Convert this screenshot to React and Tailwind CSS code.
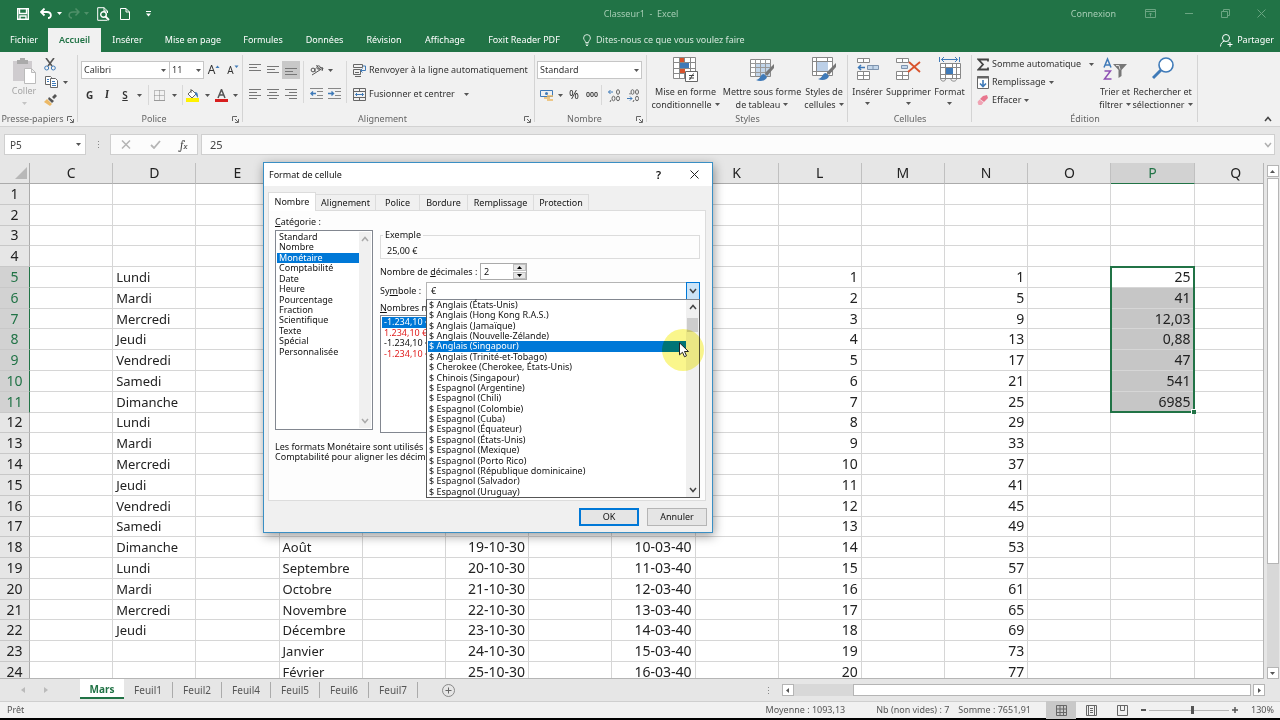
import { clsx } from "clsx"

const days = ["Lundi", "Mardi", "Mercredi", "Jeudi", "Vendredi", "Samedi", "Dimanche"];
const months = ["Août", "Septembre", "Octobre", "Novembre", "Décembre", "Janvier", "Février"];
const amounts = ["25", "41", "12,03", "0,88", "47", "541", "6985"];
const columns = ["C", "D", "E", "F", "G", "H", "I", "J", "K", "L", "M", "N", "O", "P", "Q"];
const rows = Array.from({ length: 24 }, (_, i) => i + 1);

const cellValue = (col, row) => {
    if (row < 5) return "";
    if (col === "D") return row <= 22 ? days[(row - 5) % 7] : "";
    if (col === "F") return months[row - 18] || "";
    if (col === "H") return row >= 18 ? `${row + 1}-10-30` : "";
    if (col === "J") return row >= 18 ? `${row - 8}-03-40` : "";
    if (col === "L") return row - 4;
    if (col === "N") return (row - 5) * 4 + 1;
    if (col === "P") return amounts[row - 5] || "";
    return "";
};

const menu = [
    ["Fichier", "w-[48px]"],
    ["Accueil", "w-[53px]"],
    ["Insérer", "w-[53px]"],
    ["Mise en page", "w-[78px]"],
    ["Formules", "w-[62px]"],
    ["Données", "w-[61px]"],
    ["Révision", "w-[58px]"],
    ["Affichage", "w-[64px]"],
    ["Foxit Reader PDF", "w-[94px]"],
];

const categories = ["Standard", "Nombre", "Monétaire", "Comptabilité", "Date", "Heure", "Pourcentage", "Fraction", "Scientifique", "Texte", "Spécial", "Personnalisée"];

const symbols = [
    "Anglais (États-Unis)", "Anglais (Hong Kong R.A.S.)", "Anglais (Jamaïque)", "Anglais (Nouvelle-Zélande)",
    "Anglais (Singapour)", "Anglais (Trinité-et-Tobago)", "Cherokee (Cherokee, États-Unis)", "Chinois (Singapour)",
    "Espagnol (Argentine)", "Espagnol (Chili)", "Espagnol (Colombie)", "Espagnol (Cuba)", "Espagnol (Équateur)",
    "Espagnol (États-Unis)", "Espagnol (Mexique)", "Espagnol (Porto Rico)", "Espagnol (République dominicaine)",
    "Espagnol (Salvador)", "Espagnol (Uruguay)",
];

const negatives = [
    ["-1.234,10 €", "bg-[#0078d7] text-white"],
    ["1.234,10 €", "text-[#e02020]"],
    ["-1.234,10 €", ""],
    ["-1.234,10 €", "text-[#e02020]"],
];

const Svg = ({ w = 14, h = 14, label, children, className = "" }) => (
    <svg width={w} height={h} viewBox={`0 0 ${w} ${h}`} fill="none" stroke="#666" strokeWidth="1" aria-hidden={!label} aria-label={label} className={`shrink-0 ${className}`}>
        {children}
    </svg>
);

const Arrow = ({ color = "#555", className = "" }) => (
    <svg width="5" height="3" viewBox="0 0 5 3" fill={color} className={`shrink-0 ${className}`} aria-hidden="true">
        <path d="M0 0h5L2.500 3z" />
    </svg>
);

const Chevron = ({ up, color = "#444" }) => (
    <Svg w={8} h={6}>
        <path d={up ? "M1 5l3-3.500 3 3.500" : "M1 1l3 3.500 3-3.500"} stroke={color} strokeWidth="1.500" />
    </Svg>
);

const Tool = ({ label, w = "w-[18px]", className = "", children }) => (
    <button aria-label={label} className={`flex h-[18px] shrink-0 items-center justify-center ${w} ${className}`}>
        {children}
    </button>
);

const Sep = () => <span className="h-[20px] w-px shrink-0 bg-[#d8d8d8]" />;

const Launcher = () => (
    <button aria-label="Options" className="absolute right-[4px] bottom-[3px]">
        <Svg w={7} h={7}>
            <path d="M.5 5V.5H5M3 3l3 3M6.500 3v3.500H3" />
        </Svg>
    </button>
);

const Group = ({ title, w, launcher, children }) => (
    <section className={`relative flex shrink-0 flex-col ${w}`}>
        <div className="h-[60px]">{children}</div>
        <h2 className={clsx("h-[14px] text-center leading-[14px] text-[#666]", launcher && "pr-[13px]")}>{title}</h2>
        {launcher && <Launcher />}
        <span className="absolute top-[3px] right-0 h-[67px] w-px bg-[#d4d4d4]" />
    </section>
);

const BigButton = ({ lines, w, icon }) => (
    <button className={`flex h-[60px] shrink-0 flex-col items-center pt-[5px] leading-[13px] whitespace-nowrap ${w}`}>
        <span className="flex h-[28px] items-start">{icon}</span>
        <span>{lines[0]}</span>
        <span className="flex items-center gap-[3px]">
            {lines[1]}
            <Arrow className={lines[1] ? "" : "mt-[4px]"} />
        </span>
    </button>
);

const Lines = ({ rows: widths, align = "left", top = 2 }) => (
    <Svg w={12} h={14}>
        {widths.map((width, i) => {
            const x = align === "left" ? 0 : align === "right" ? 12 - width : (12 - width) / 2;
            return <path key={i} d={`M${x} ${top + i * 3 + 0.5}h${width}`} stroke="#777" />;
        })}
    </Svg>
);

const Brush = ({ x, y }) => (
    <g transform={`translate(${x} ${y})`}>
        <path d="M18 0L9 9l2 3 7-8z" fill="#777" stroke="none" />
        <path d="M8 10c-4 0-3 5-8 6 4 2 10 1 11-3z" fill="#3f7ab8" stroke="none" />
    </g>
);

const TitleBar = () => (
    <header className="flex h-[27px] shrink-0 items-center text-[9px] text-white">
        <div className="flex flex-1 items-center pl-[15px]">
            <Tool label="Enregistrer" w="w-[16px]">
                <Svg w={12} h={12}>
                    <path d="M.7.700h10.600v10.600H.7zM2.500 1v4.500h7V1M3 11V8h6v3" stroke="#fff" strokeWidth="1.400" />
                </Svg>
            </Tool>
            <Tool label="Annuler la frappe" w="w-[33px]" className="gap-[5px] pl-[7px]">
                <Svg w={12} h={11}>
                    <path d="M4.500.500L1 4l3.500 3.500M1 4h6c5 0 5 6 1 6" stroke="#fff" strokeWidth="1.800" />
                </Svg>
                <Arrow color="#fff" />
            </Tool>
            <Tool label="Répéter" w="w-[27px]" className="gap-[4px] pl-[2px]">
                <Svg w={12} h={11}>
                    <path d="M7.500.500L11 4 7.500 7.500M11 4H5C0 4 0 10 4 10" stroke="#4f9069" strokeWidth="1.500" />
                </Svg>
                <Arrow color="#4f9069" />
            </Tool>
            <Tool label="Aperçu" w="w-[24px]">
                <Svg w={13} h={14}>
                    <path d="M10.500 13.300H.7V.7H7L10.500 4v2M7 .7V4h3.500" stroke="#fff" />
                    <circle cx="6.500" cy="7.500" r="2.800" stroke="#fff" strokeWidth="1.400" />
                    <path d="M8.500 9.500l3.500 3.500" stroke="#fff" strokeWidth="1.800" />
                </Svg>
            </Tool>
            <Tool label="Nouveau" w="w-[20px]">
                <Svg w={10} h={12}>
                    <path d="M.5.500H6L9.500 4v7.500h-9zM6 .5V4h3.500" stroke="#fff" />
                </Svg>
            </Tool>
            <Tool label="Personnaliser" w="w-[26px]">
                <Svg w={5} h={6}>
                    <path d="M0 .500h5" stroke="#fff" />
                    <path d="M0 2.500h5L2.500 5.500z" fill="#fff" stroke="none" />
                </Svg>
            </Tool>
        </div>
        <h1 className="whitespace-pre text-[#a6ccb4]">Classeur1  -  Excel</h1>
        <div className="flex flex-1 items-center justify-end pr-[13px] text-[#a6ccb4]">
            <button className="mr-[28px]">Connexion</button>
            <Tool label="Affichage du ruban" w="w-[12px]" className="mr-[27px]">
                <Svg w={11} h={9}>
                    <path d="M.5.500h10v8H.5zM.5 2.500h10M5.500 7.500V4M4 5.500L5.500 4 7 5.500" stroke="#6ba582" />
                </Svg>
            </Tool>
            <Tool label="Réduire" w="w-[12px]" className="mr-[24px]">
                <Svg w={8} h={9}><path d="M0 4.500h8" stroke="#6ba582" /></Svg>
            </Tool>
            <Tool label="Restaurer" w="w-[12px]" className="mr-[24px]">
                <Svg w={9} h={9}><path d="M.5 2.500h6v6h-6zM2.500 2V.500h6v6H7" stroke="#6ba582" /></Svg>
            </Tool>
            <Tool label="Fermer" w="w-[12px]">
                <Svg w={9} h={9}><path d="M.5.500l8 8M8.500.500l-8 8" stroke="#6ba582" /></Svg>
            </Tool>
        </div>
    </header>
);

const MenuBar = () => (
    <nav className="flex h-[25px] shrink-0 items-end text-[9px] text-white">
        {menu.map(([name, width]) => (
            <button key={name} className={clsx("h-[24px] shrink-0 whitespace-nowrap", width, name === "Accueil" && "bg-[#f1f1f1] font-semibold text-[#217346]")}>
                {name}
            </button>
        ))}
        <button className="ml-[12px] flex h-[24px] items-center gap-[5px] whitespace-nowrap text-[#d3e6da]">
            <Svg w={8} h={12}>
                <path d="M2.500 8.500C2.500 6.500.6 6 .6 4a3.400 3.400 0 016.800 0c0 2-1.900 2.500-1.900 4.500zM2.500 10h3M3 11.500h2" stroke="#d3e6da" />
            </Svg>
            Dites-nous ce que vous voulez faire
        </button>
        <button className="mr-[6px] ml-auto flex h-[24px] items-center gap-[4px]">
            <Svg w={13} h={13}>
                <circle cx="6" cy="4" r="3.500" stroke="#fff" />
                <path d="M.5 12.500c0-3 2-5 4-5.500M8 7.500l1 1M10 8v5M7.500 10.500h5" stroke="#fff" />
            </Svg>
            Partager
        </button>
    </nav>
);

const Ribbon = () => (
    <div className="relative flex h-[75px] shrink-0 overflow-hidden border-b border-[#d2d2d2] bg-[#f1f1f1] text-[9px] text-[#333]">
        <Group title="Presse-papiers" w="w-[78px]" launcher>
            <div className="flex">
                <button className="flex w-[46px] flex-col items-center pt-[6px] pl-[2px] text-[#a6a6a6]">
                    <Svg w={24} h={26}>
                        <path d="M1 3h19v20H1z" fill="#cfcccf" stroke="none" />
                        <path d="M5 2h3V0h5v2h3v4H5z" fill="#aaa" stroke="none" />
                        <path d="M12.500 10.500h7l4 4v11h-11zM19.500 10.500v4h4" fill="#fff" stroke="#bbb" />
                    </Svg>
                    <span className="leading-[14px]">Coller</span>
                    <Arrow color="#c4c4c4" className="mt-[4px]" />
                </button>
                <div className="flex flex-col pt-[3px]">
                    <Tool label="Couper" w="w-[8px]">
                        <Svg w={12} h={13}>
                            <path d="M2 0l6 8M10 0L4 8" stroke="#555" strokeWidth="1.600" />
                            <circle cx="2.700" cy="10" r="2" stroke="#3f7ab8" />
                            <circle cx="9.300" cy="10" r="2" stroke="#3f7ab8" />
                        </Svg>
                    </Tool>
                    <Tool label="Copier" w="w-[20px]" className="gap-[5px]">
                        <Svg w={13} h={12}>
                            <path d="M.5.500h5l1 1v7h-6z" fill="#fff" />
                            <path d="M5.500 2.500h5l2 2v7h-7z" fill="#fff" />
                            <path d="M7 5.500h3M7 7.500h4M7 9.500h4M2 3.500h2M2 5.500h2" stroke="#3f7ab8" />
                        </Svg>
                        <Arrow />
                    </Tool>
                    <Tool label="Reproduire la mise en forme" w="w-[8px]">
                        <Svg w={13} h={12}>
                            <path d="M8 3l3-3 2 2-3 3zM5 3l5 4-2 2-4-4z" fill="#555" stroke="none" />
                            <path d="M3 5l5 5-2 2-6-4z" fill="#ecb966" stroke="none" />
                        </Svg>
                    </Tool>
                </div>
            </div>
        </Group>

        <Group title="Police" w="w-[165px]" launcher>
            <div className="flex flex-col gap-[6px] pt-[9px] pl-[3px]">
                <div className="flex">
                    <label className="relative flex w-[89px] items-center">
                        <select aria-label="Nom de la police" className="h-[18px] w-full appearance-none border border-[#c6c6c6] bg-white pl-[2px]">
                            <option>Calibri</option>
                        </select>
                        <Arrow className="pointer-events-none absolute right-[4px]" />
                    </label>
                    <label className="relative -ml-px flex w-[35px] items-center">
                        <select aria-label="Taille" className="h-[18px] w-full appearance-none border border-[#c6c6c6] bg-white pl-[2px]">
                            <option>11</option>
                        </select>
                        <Arrow className="pointer-events-none absolute right-[3px]" />
                    </label>
                    <Tool label="Augmenter la taille" w="w-[20px]" className="text-[12px]">
                        A<Svg w={5} h={10}><path d="M.5 3L2.500.500 4.500 3z" fill="#3f7ab8" stroke="none" /></Svg>
                    </Tool>
                    <Tool label="Réduire la taille" w="w-[18px]" className="text-[10px]">
                        A<Svg w={5} h={10}><path d="M.5.500h4L2.500 3z" fill="#3f7ab8" stroke="none" /></Svg>
                    </Tool>
                </div>
                <div className="flex items-center text-[10px]">
                    <Tool label="Gras" w="w-[17px]" className="font-bold">G</Tool>
                    <Tool label="Italique" className="font-serif text-[11px] font-bold italic">I</Tool>
                    <Tool label="Souligné" w="w-[32px]" className="gap-[9px]"><u className="font-semibold">S</u><Arrow /></Tool>
                    <Sep />
                    <Tool label="Bordures" w="w-[33px]" className="gap-[7px]">
                        <Svg w={11} h={11}>
                            <path d="M.5.500h10v10H.5zM5.500.500v10M.5 5.500h10" stroke="#888" strokeDasharray="1 1" />
                            <path d="M0 10.500h11" stroke="#999" />
                        </Svg>
                        <Arrow />
                    </Tool>
                    <Sep />
                    <Tool label="Couleur de remplissage" w="w-[29px]" className="gap-[6px]">
                        <Svg w={13} h={13}>
                            <path d="M2 5l4-4 4 4-4 4z" fill="#fff" />
                            <path d="M5 0v4" />
                            <path d="M9 3c3 0 3 3 3 6l-3-4z" fill="#3f7ab8" stroke="none" />
                            <path d="M0 9h13v4H0z" fill="#fff200" stroke="none" />
                        </Svg>
                        <Arrow />
                    </Tool>
                    <Tool label="Couleur de police" w="w-[28px]" className="gap-[5px]">
                        <Svg w={13} h={13}>
                            <path d="M3 9l3.500-8.500L10 9M4.500 6h4" stroke="#555" strokeWidth="1.500" />
                            <path d="M0 10h13v3H0z" fill="#d81e1e" stroke="none" />
                        </Svg>
                        <Arrow />
                    </Tool>
                </div>
            </div>
        </Group>

        <Group title="Alignement" w="w-[292px]" launcher>
            <div className="flex pt-[9px] pl-[3px]">
                <div className="flex flex-col gap-[6px]">
                    <div className="flex">
                        <Tool label="Aligner en haut"><Lines rows={[12, 8, 12]} top={1} /></Tool>
                        <Tool label="Aligner au centre"><Lines rows={[12, 8, 12]} top={3} /></Tool>
                        <Tool label="Aligner en bas" className="bg-[#c8c8c8]"><Lines rows={[12, 8, 12]} top={5} /></Tool>
                    </div>
                    <div className="flex">
                        <Tool label="Aligner à gauche"><Lines rows={[12, 8, 12, 8]} /></Tool>
                        <Tool label="Centrer"><Lines rows={[12, 8, 12, 8]} align="center" /></Tool>
                        <Tool label="Aligner à droite"><Lines rows={[12, 8, 12, 8]} align="right" /></Tool>
                    </div>
                </div>
                <span className="mx-[3px] h-[42px] w-px bg-[#d8d8d8]" />
                <div className="flex flex-col gap-[6px]">
                    <Tool label="Orientation" w="w-[28px]" className="gap-[4px]">
                        <Svg w={14} h={12}>
                            <circle cx="3" cy="6" r="1.900" stroke="#555" />
                            <path d="M5 4v4M6.500 1l3 4.500M2 11L13 4M10 3.500l3 .5-1 3" stroke="#555" />
                            <circle cx="8.500" cy="3.500" r="1.700" stroke="#555" />
                        </Svg>
                        <Arrow />
                    </Tool>
                    <div className="flex">
                        <Tool label="Diminuer le retrait">
                            <Svg w={13} h={12}>
                                <path d="M0 .500h13M7 3.500h6M7 7.500h6M0 10.500h13" stroke="#888" />
                                <path d="M6 5.500H1M3 3.500l-2 2 2 2" stroke="#3f7ab8" strokeWidth="1.400" />
                            </Svg>
                        </Tool>
                        <Tool label="Augmenter le retrait">
                            <Svg w={13} h={12}>
                                <path d="M0 .500h13M7 3.500h6M7 7.500h6M0 10.500h13" stroke="#888" />
                                <path d="M0 5.500h5M3.500 3.500l2 2-2 2" stroke="#3f7ab8" strokeWidth="1.400" />
                            </Svg>
                        </Tool>
                    </div>
                </div>
                <span className="mx-[3px] h-[42px] w-px bg-[#d8d8d8]" />
                <div className="flex flex-col gap-[6px] pl-[3px]">
                    <button className="flex h-[18px] items-center gap-[3px] whitespace-nowrap">
                        <Svg w={13} h={13}>
                            <path d="M.5.500h9v3h-9zM.5 5.500h7v5h-7zM2 8.500h4M2 12.500h6" />
                            <path d="M10 2h2.500v4.500H8M9.500 4.500l-2 2 2 2" stroke="#3f7ab8" />
                        </Svg>
                        Renvoyer à la ligne automatiquement
                    </button>
                    <button className="flex h-[18px] items-center gap-[3px] whitespace-nowrap">
                        <Svg w={13} h={13}>
                            <path d="M.5.500h12v12H.5zM.5 3.500h12M.5 9.500h12M6.500.500v3M6.500 9.500v3" />
                            <path d="M2.500 6.500h8M4 5L2.500 6.500 4 8M9 5l1.500 1.500L9 8" stroke="#3f7ab8" />
                        </Svg>
                        Fusionner et centrer
                        <Arrow className="ml-[6px]" />
                    </button>
                </div>
            </div>
        </Group>

        <Group title="Nombre" w="w-[112px]" launcher>
            <div className="flex flex-col gap-[6px] pt-[9px] pl-[2px]">
                <label className="relative flex w-[105px] items-center">
                    <select aria-label="Format de nombre" className="h-[18px] w-full appearance-none border border-[#c6c6c6] bg-white pl-[2px]">
                        <option>Standard</option>
                    </select>
                    <Arrow className="pointer-events-none absolute right-[3px]" />
                </label>
                <div className="flex items-center">
                    <Tool label="Format comptabilité" w="w-[28px]" className="gap-[5px]">
                        <Svg w={13} h={13}>
                            <path d="M.5 1.500h12v6H.5z" stroke="#3f7ab8" />
                            <circle cx="6.500" cy="4.500" r="1.500" fill="#3f7ab8" stroke="none" />
                            <path d="M4 9h6M7 11h6M7 7h6" stroke="#ecb966" strokeWidth="1.500" />
                        </Svg>
                        <Arrow />
                    </Tool>
                    <Tool label="Pourcentage" w="w-[18px]" className="text-[12px]">%</Tool>
                    <Tool label="Milliers" className="text-[7px] font-semibold">000</Tool>
                    <Sep />
                    {["Ajouter une décimale", "Réduire les décimales"].map((label, i) => (
                        <Tool key={label} label={label} w="w-[19px]" className="pl-[4px]">
                            <Svg w={12} h={13}>
                                {i === 0 && <path d="M5 3H.5M2.500 1l-2 2 2 2" stroke="#3f7ab8" />}
                                {i === 1 && <path d="M0 9.500h5M3 7.500l2 2-2 2" stroke="#3f7ab8" />}
                                <ellipse cx="10" cy="3" rx="1.500" ry="2.300" />
                                <ellipse cx="10" cy="9.500" rx="1.500" ry="2.300" />
                                {i === 0 ? <ellipse cx="5.500" cy="9.500" rx="1.500" ry="2.300" /> : <ellipse cx="5.500" cy="3" rx="1.500" ry="2.300" />}
                                <path d={i === 0 ? "M3 11l-1 2" : "M3 4v1.500M7 11l-1 2"} />
                            </Svg>
                        </Tool>
                    ))}
                </div>
            </div>
        </Group>

        <Group title="Styles" w="w-[201px]">
            <div className="flex pl-[1px]">
                <BigButton w="w-[75px]" lines={["Mise en forme", "conditionnelle"]} icon={
                    <Svg w={25} h={26}>
                        <path d="M.5.500h22v21H.5zM.5 5.500h22M.5 11.500h22M.5 16.500h22M6.500.500v21M11.500.500v21M17.500.500v21" fill="#fff" stroke="#888" />
                        <path d="M7 1h4v4H7zM7 12h5v4H7z" fill="#d9532c" stroke="none" />
                        <path d="M7 6h9v5H7z" fill="#3f7ab8" stroke="none" />
                        <path d="M12.500 14.500h12v10h-12z" fill="#fff" />
                        <path d="M16 18.500h5M16 21h5M20.500 16.500l-4 6.500" stroke="#444" />
                    </Svg>
                } />
                <BigButton w="w-[78px]" lines={["Mettre sous forme", "de tableau"]} icon={
                    <Svg w={25} h={26}>
                        <path d="M.5 2.500h20v17H.5z" fill="#fff" stroke="#888" />
                        <path d="M6 7h14v12H6z" fill="#c3d6ea" stroke="none" />
                        <path d="M.5 6.500h20M.5 10.500h20M.5 15.500h20M5.500 2.500v17M10.500 2.500v17M15.500 2.500v17" stroke="#999" />
                        <Brush x={6} y={7} />
                    </Svg>
                } />
                <BigButton w="w-[46px]" lines={["Styles de", "cellules"]} icon={
                    <Svg w={25} h={26}>
                        <path d="M.5.500h20v18H.5zM.5 4.500h20M.5 14.500h20M4.500.500v18M15.500.500v18" fill="#fff" stroke="#888" />
                        <path d="M5 5h11v9H5z" fill="#bcd0e8" stroke="none" />
                        <Brush x={6} y={6} />
                    </Svg>
                } />
            </div>
        </Group>

        <Group title="Cellules" w="w-[124px]">
            <div className="flex">
                <BigButton w="w-[39px]" lines={["Insérer", ""]} icon={
                    <Svg w={22} h={24}>
                        <path d="M.5 1.500h12v4H.5zM6.500 1.500v4M.5 14.500h12v8H.5zM6.500 14.500v8M.5 18.500h12" fill="#fff" stroke="#888" />
                        <path d="M10.500 8.500h11v4h-11zM16 8.500v4" fill="#c3d6ea" stroke="#7d93ad" />
                        <path d="M8 10.500H1.500M4 8l-2.500 2.500L4 13" stroke="#3f7ab8" strokeWidth="1.500" />
                    </Svg>
                } />
                <BigButton w="w-[43px]" lines={["Supprimer", ""]} icon={
                    <Svg w={25} h={24}>
                        <path d="M.5 1.500h12v4H.5zM6.500 1.500v4M.5 14.500h12v8H.5zM6.500 14.500v8M.5 18.500h12" fill="#fff" stroke="#888" />
                        <path d="M5.500 8.500h6v3h-6z" fill="#c3d6ea" stroke="#7d93ad" />
                        <path d="M13 5l11 10M24 5L12 15" stroke="#d9532c" strokeWidth="1.800" />
                    </Svg>
                } />
                <BigButton w="w-[39px]" lines={["Format", ""]} icon={
                    <Svg w={24} h={26}>
                        <path d="M3.500 2.500h16M6 0L3.500 2.500 6 5M17 0l2.500 2.500L17 5M1.500 0v5M21.500 0v5" stroke="#3f7ab8" />
                        <path d="M2.500 6.500h20v15h-20zM2.500 10.500h20M2.500 17.500h20M7.500 6.500v15M14.500 6.500v15M18.500 6.500v15" fill="#fff" stroke="#888" />
                        <path d="M8 11h7v6H8z" fill="#3f7ab8" stroke="none" />
                        <path d="M2.500 21c0 4 5 4 5 1M12.500 21c0 4 6 4 6 1" stroke="#888" />
                    </Svg>
                } />
            </div>
        </Group>

        <Group title="Édition" w="w-[226px]">
            <div className="flex">
                <div className="flex w-[127px] flex-col pt-[3px] pl-[5px]">
                    <button className="flex h-[18px] items-center gap-[3px] whitespace-nowrap">
                        <Svg w={12} h={13}><path d="M11 3.500V1.500H1.500L6 6.500l-4.500 5H11v-2" stroke="#444" strokeWidth="1.800" /></Svg>
                        Somme automatique
                        <Arrow className="ml-[5px]" />
                    </button>
                    <button className="flex h-[18px] items-center gap-[3px]">
                        <Svg w={12} h={13}>
                            <path d="M.5.500h11v12H.5z" fill="#fff" />
                            <path d="M0 1.500h12" stroke="#666" strokeWidth="2" />
                            <path d="M6 4v6.500M3 7.500l3 3 3-3" stroke="#3f7ab8" strokeWidth="1.600" />
                        </Svg>
                        Remplissage <Arrow />
                    </button>
                    <button className="flex h-[18px] items-center gap-[3px]">
                        <Svg w={12} h={11}>
                            <path d="M6 1l4-1 1 3-4 4-4-3z" fill="#e8768e" stroke="none" />
                            <path d="M2.500 4.500l4 3-2 2.500H1.500L.5 7z" fill="#f0a3b3" stroke="none" />
                        </Svg>
                        Effacer <Arrow />
                    </button>
                </div>
                <BigButton w="w-[32px]" lines={["Trier et", "filtrer"]} icon={
                    <Svg w={24} h={24}>
                        <path d="M1 10.500L4.500 2 8 10.500M2.500 8h4.500" stroke="#3f7ab8" strokeWidth="1.500" />
                        <path d="M1.500 14h6l-6 8h7" stroke="#8d4fb3" strokeWidth="1.500" />
                        <path d="M10 7h14l-5.500 6v6l-3 2v-8z" fill="#777" stroke="none" />
                        <path d="M13 8.500h3l1 4" stroke="#ddd" />
                    </Svg>
                } />
                <BigButton w="w-[63px]" lines={["Rechercher et", "sélectionner"]} icon={
                    <Svg w={22} h={23}>
                        <circle cx="14" cy="8" r="7" fill="#fff" stroke="#3f7ab8" strokeWidth="1.600" />
                        <path d="M9 13l-8 8" stroke="#3f7ab8" strokeWidth="3" />
                    </Svg>
                } />
            </div>
        </Group>
        <button aria-label="Réduire le ruban" className="mt-auto mr-[8px] mb-[4px] ml-auto"><Chevron up /></button>
    </div>
);

const FormulaBar = () => (
    <div className="flex h-[36px] shrink-0 pt-[7px] pr-[5px] pl-[4px] text-[10px] text-[#444]">
        <label className="relative flex h-[21px] w-[82px] items-center">
            <input aria-label="Zone Nom" defaultValue="P5" className="h-full w-full border border-[#cfcfcf] bg-white pl-[5px]" />
            <Arrow className="absolute right-[5px]" />
        </label>
        <span className="flex h-[21px] w-[24px] flex-col items-center justify-center gap-[2px]">
            <i className="size-px bg-[#888]" /><i className="size-px bg-[#888]" /><i className="size-px bg-[#888]" />
        </span>
        <div className="mr-[3px] flex h-[21px] w-[88px] items-center justify-around border border-[#cfcfcf] bg-[#fcfcfc]">
            <button aria-label="Annuler la saisie"><Svg w={10} h={9}><path d="M1 .500l8 8M9 .500l-8 8" stroke="#b5b5b5" strokeWidth="1.500" /></Svg></button>
            <button aria-label="Valider"><Svg w={11} h={9}><path d="M1 5l3 3 6-7" stroke="#b5b5b5" strokeWidth="1.800" /></Svg></button>
            <button className="font-serif text-[12px] leading-none italic">f<span className="text-[9px]">x</span></button>
        </div>
        <label className="relative flex h-[21px] flex-1 items-center text-[11px]">
            <input aria-label="Barre de formule" defaultValue="25" className="h-full w-full border border-[#cfcfcf] bg-[#fcfcfc] pl-[8px]" />
            <span className="absolute right-[3px]"><Chevron color="#b0b0b0" /></span>
        </label>
    </div>
);

const Sheet = () => (
    <div className="flex min-h-0 flex-1">
        <div className="min-w-0 flex-1 overflow-hidden border-r border-b border-[#b5b5b5] bg-white">
            <table className="h-[calc(100%+5px)] w-[calc(100%+15px)] table-fixed border-separate border-spacing-0 text-[14px] leading-[16px] text-[#222]">
                <thead>
                    <tr className="h-[21px] bg-[#e6e6e6]">
                        <th className="w-[30px] border-r border-b border-[#ababab] p-0">
                            <Svg w={12} h={12} className="ml-auto mr-[2px]"><path d="M12 0v12H0z" fill="#b8b8b8" stroke="none" /></Svg>
                        </th>
                        {columns.map((col) => (
                            <th key={col} scope="col" className={clsx("border-r border-b p-0 font-normal", col === "P" ? "border-r-[#c0c0c0] border-b-[#217346] bg-[#d2d2d2] text-[#217346]" : "border-r-[#c0c0c0] border-b-[#ababab]")}>
                                {col}
                            </th>
                        ))}
                    </tr>
                </thead>
                <tbody>
                    {rows.map((row) => (
                        <tr key={row}>
                            <th scope="row" className={clsx("border-r border-b border-b-[#c8c8c8] p-0 font-normal", row >= 5 && row <= 11 ? "border-r-[#217346] bg-[#d2d2d2] text-[#217346]" : "border-r-[#ababab] bg-[#e6e6e6]")}>
                                {row}
                            </th>
                            {columns.map((col) => (
                                <td key={col} className={clsx(
                                    "border-r border-b border-[#d6d6d6] p-0 px-[3px]",
                                    col === "D" || col === "F" ? "text-[13px]" : "text-right",
                                    col === "P" && row >= 6 && row <= 11 && "bg-[#c6c6c6]",
                                    col === "P" && row === 5 && "relative",
                                )}>
                                    {cellValue(col, row)}
                                    {col === "P" && row === 5 && (
                                        <span className="absolute -top-px -left-px h-[calc(700%+8px)] w-[calc(100%+2px)] border-2 border-[#217346]">
                                            <i className="absolute -right-[3px] -bottom-[3px] size-[5px] border-t border-l border-white bg-[#217346]" />
                                        </span>
                                    )}
                                </td>
                            ))}
                        </tr>
                    ))}
                </tbody>
            </table>
        </div>
        <div className="ml-[1px] flex w-[15px] shrink-0 flex-col items-center pt-[2px]">
            <button aria-label="Défiler vers le haut" className="mb-px flex h-[12px] w-[12px] items-center justify-center border border-[#b5b5b5] bg-white">
                <Arrow className="rotate-180" />
            </button>
            <div className="w-[12px] flex-1 bg-[#d8d8d8]">
                <div className="h-[79%] border border-[#b5b5b5] bg-white" />
            </div>
            <button aria-label="Défiler vers le bas" className="flex h-[12px] w-[12px] items-center justify-center border border-[#b5b5b5] bg-white">
                <Arrow />
            </button>
        </div>
    </div>
);

const SheetTabs = () => (
    <div className="flex h-[22px] shrink-0 text-[10px] text-[#555]">
        <div className="flex w-[80px] items-center justify-center gap-[19px] pr-[12px]">
            <Svg w={4} h={6}><path d="M4 0v6L0 3z" fill="#bbb" stroke="none" /></Svg>
            <Svg w={4} h={6}><path d="M0 0v6l4-3z" fill="#bbb" stroke="none" /></Svg>
        </div>
        <button className="h-[20px] w-[44px] border-b-2 border-[#217346] bg-white pt-[2px] font-bold text-[#217346]">Mars</button>
        {["Feuil1", "Feuil2", "Feuil4", "Feuil5", "Feuil6", "Feuil7"].map((name) => (
            <button key={name} className="mt-[3px] h-[16px] w-[49px] border-r border-[#ababab] leading-[16px]">{name}</button>
        ))}
        <button aria-label="Nouvelle feuille" className="ml-[24px]">
            <Svg w={13} h={13}><circle cx="6.500" cy="6.500" r="6" stroke="#888" /><path d="M3.500 6.500h6M6.500 3.500v6" /></Svg>
        </button>
        <div className="mr-[15px] ml-auto flex w-[39%] items-center">
            <span className="mr-[13px] flex flex-col gap-[2px] pl-[2px]">
                <i className="size-px bg-[#888]" /><i className="size-px bg-[#888]" /><i className="size-px bg-[#888]" />
            </span>
            <button aria-label="Défiler à gauche" className="flex h-[12px] w-[12px] items-center justify-center border border-[#b5b5b5] bg-white">
                <Svg w={3} h={5}><path d="M3 0v5L0 2.500z" fill="#555" stroke="none" /></Svg>
            </button>
            <div className="flex h-[12px] flex-1 justify-end bg-[#d8d8d8]">
                <div className="w-[87%] border border-[#b5b5b5] bg-white" />
            </div>
            <button aria-label="Défiler à droite" className="ml-[2px] flex h-[12px] w-[12px] items-center justify-center border border-[#b5b5b5] bg-white">
                <Svg w={3} h={5}><path d="M0 0v5l3-2.500z" fill="#555" stroke="none" /></Svg>
            </button>
        </div>
    </div>
);

const StatusBar = () => (
    <footer className="flex h-[19px] shrink-0 items-center border-t border-b-2 border-t-[#cfcfcf] border-b-black bg-[#f1f1f1] pr-[6px] pl-[7px] text-[9px] whitespace-nowrap text-[#555]">
        <span className="mr-auto">Prêt</span>
        <span className="mr-[31px]">Moyenne : 1093,13</span>
        <span className="mr-[9px]">Nb (non vides) : 7</span>
        <span className="mr-[15px]">Somme : 7651,91</span>
        <Tool label="Normal" w="w-[30px]" className="bg-[#c8c8c8]">
            <Svg w={11} h={11}><path d="M.5.500h10v10H.5zM.5 4h10M.5 7.500h10M4 .5v10M7.500.500v10" /></Svg>
        </Tool>
        <Tool label="Mise en page" w="w-[31px]">
            <Svg w={11} h={11}><path d="M.5.500h10v10H.5zM2.500 1v9M8.500 1v9M4 3.500h3M4 5.500h3M4 7.500h3" /></Svg>
        </Tool>
        <Tool label="Aperçu des sauts de page" w="w-[30px]">
            <Svg w={11} h={11}><path d="M.5.500h10v10H.5zM3.500.500v5h4v-5" /></Svg>
        </Tool>
        <button aria-label="Zoom arrière" className="mr-[3px] ml-[4px] h-[2px] w-[5px] bg-[#555]" />
        <input
            type="range"
            aria-label="Zoom"
            min="0"
            max="100"
            defaultValue="55"
            className="h-[10px] w-[80px] appearance-none bg-[linear-gradient(#b5b5b5,#b5b5b5)] bg-[length:100%_1px] bg-center bg-no-repeat [&::-webkit-slider-thumb]:h-[8px] [&::-webkit-slider-thumb]:w-[3px] [&::-webkit-slider-thumb]:appearance-none [&::-webkit-slider-thumb]:bg-[#555]"
        />
        <button aria-label="Zoom avant" className="mr-[13px] ml-[3px]">
            <Svg w={6} h={6}><path d="M0 3h6M3 0v6" stroke="#555" strokeWidth="1.500" /></Svg>
        </button>
        <span className="w-[23px]">130%</span>
    </footer>
);

const FormatDialog = () => (
    <div role="dialog" aria-label="Format de cellule" className="absolute top-[162px] left-[263px] flex h-[371px] w-[450px] flex-col border border-[#3a8fc4] bg-[#f0f0f0] text-[9px] leading-[10px] text-[#111] shadow-[1px_3px_10px_rgba(0,0,0,0.4)]">
        <div className="flex h-[23px] shrink-0 items-center bg-white pr-[13px] pl-[5px]">
            <span className="mr-auto">Format de cellule</span>
            <button aria-label="Aide" className="mr-[29px] text-[11px] font-semibold">?</button>
            <button aria-label="Fermer"><Svg w={9} h={9}><path d="M.5.500l8 8M8.500.500l-8 8" stroke="#222" /></Svg></button>
        </div>
        <div className="flex h-[24px] shrink-0 items-end pl-[4px]">
            {[["Nombre", "w-[48px]"], ["Alignement", "w-[60px]"], ["Police", "w-[44px]"], ["Bordure", "w-[48px]"], ["Remplissage", "w-[66px]"], ["Protection", "w-[55px]"]].map(([name, width], i) => (
                <button key={name} className={clsx("border border-b-0 border-[#dcdcdc]", width, i === 0 ? "relative -mb-px h-[19px] bg-white" : "h-[16px] border-l-0")}>
                    {name}
                </button>
            ))}
        </div>
        <div className="mr-[6px] ml-[4px] flex h-[291px] shrink-0 flex-col border border-[#dcdcdc] bg-[#fdfdfd] pt-[6px] pr-[5px] pl-[6px]">
            <div className="flex gap-[7px]">
                <div className="flex w-[98px] flex-col gap-[3px]">
                    <span><u>C</u>atégorie :</span>
                    <div className="flex h-[200px] border border-[#828790] bg-white p-px">
                        <ul role="listbox" aria-label="Catégorie" className="grid h-[125px] flex-1 grid-rows-12">
                            {categories.map((name) => (
                                <li key={name} role="option" aria-selected={name === "Monétaire"} className={clsx("pl-[2px]", name === "Monétaire" && "bg-[#0078d7] text-white")}>
                                    {name}
                                </li>
                            ))}
                        </ul>
                        <div className="flex w-[12px] flex-col items-center justify-between bg-[#f0f0f0] py-[4px]">
                            <Chevron up color="#aaa" />
                            <Chevron color="#aaa" />
                        </div>
                    </div>
                </div>
                <div className="flex min-w-0 flex-1 flex-col">
                    <fieldset className="mt-[13px] h-[29px] border border-[#dcdcdc] pl-[6px]">
                        <legend className="-ml-[4px] px-[2px]">Exemple</legend>
                        <p className="pt-[6px]">25,00 €</p>
                    </fieldset>
                    <div className="mt-[4px] flex h-[17px] items-center">
                        <label htmlFor="decimals" className="w-[100px]">Nombre de <u>d</u>écimales :</label>
                        <div className="flex h-[17px] w-[47px] border border-[#ababab] bg-white">
                            <input id="decimals" defaultValue="2" className="w-[32px] pl-[3px]" />
                            <div className="flex flex-1 flex-col gap-px">
                                <button aria-label="Plus" className="flex flex-1 items-center justify-center border border-[#c0c0c0] bg-[#e6e6e6]"><Arrow color="#000" className="rotate-180" /></button>
                                <button aria-label="Moins" className="flex flex-1 items-center justify-center border border-[#c0c0c0] bg-[#e6e6e6]"><Arrow color="#000" /></button>
                            </div>
                        </div>
                    </div>
                    <div className="relative mt-[2px] flex h-[18px] items-center">
                        <label htmlFor="symbol" className="w-[46px]">Sy<u>m</u>bole :</label>
                        <select id="symbol" className="h-[18px] flex-1 appearance-none border border-[#b5b5b5] bg-white pl-[4px]">
                            <option>€</option>
                        </select>
                        <span className="absolute right-0 flex h-[18px] w-[14px] items-center justify-center border border-[#0078d7] bg-[#cce4f7]"><Chevron /></span>
                        <SymbolList />
                    </div>
                    <span className="mt-[3px]"><u>N</u>ombres négatifs :</span>
                    <div className="mt-[2px] h-[118px] border border-[#828790] bg-white p-px">
                        <ul role="listbox" aria-label="Nombres négatifs" className="grid h-[42px] grid-rows-4">
                            {negatives.map(([value, color], i) => (
                                <li key={i} role="option" aria-selected={i === 0} className={`pl-[2px] ${color}`}>{value}</li>
                            ))}
                        </ul>
                    </div>
                </div>
            </div>
            <p className="mt-[9px]">
                Les formats Monétaire sont utilisés pour des valeurs monétaires générales. Utilisez les formats de Comptabilité pour aligner les décimaux dans une colonne.
            </p>
        </div>
        <div className="flex flex-1 items-center justify-end gap-[8px] pr-[5px]">
            <button className="h-[18px] w-[60px] border-2 border-[#0078d7] bg-[#e5e5e5]">OK</button>
            <button className="h-[18px] w-[60px] border border-[#b5b5b5] bg-[#e5e5e5]">Annuler</button>
        </div>
    </div>
);

const SymbolList = () => (
    <div className="absolute top-[17px] right-0 left-[46px] z-10 flex h-[199px] border border-[#555] border-t-[#828790] bg-white">
        <ul role="listbox" aria-label="Symbole" className="grid min-w-0 flex-1 grid-rows-19 pl-px">
            {symbols.map((name) => (
                <li key={name} role="option" aria-selected={name === "Anglais (Singapour)"} className={clsx("pl-px whitespace-nowrap", name === "Anglais (Singapour)" && "bg-[#0078d7] text-white")}>
                    $ {name}
                </li>
            ))}
        </ul>
        <div className="flex w-[13px] flex-col items-center bg-[#f0f0f0] py-[4px]">
            <Chevron up />
            <span className="mt-[8px] mb-auto h-[14px] w-[11px] bg-[#cdcdcd]" />
            <Chevron />
        </div>
    </div>
);

const Pointer = () => (
    <>
        <div className="pointer-events-none absolute top-[329px] left-[662px] z-20 size-[42px] rounded-full bg-[#faf68c] mix-blend-multiply" />
        <svg width="11" height="17" viewBox="0 0 11 17" className="pointer-events-none absolute top-[342px] left-[679px] z-30" aria-hidden="true">
            <path d="M.5.800v12l3-2.500 2 4.500 2-1-2-4.300h4z" fill="#fff" stroke="#222" />
        </svg>
    </>
);

const App = () => {
    return (
        <div className="relative flex h-screen flex-col overflow-hidden bg-[#e6e6e6] font-['Noto_Sans','Open_Sans',sans-serif]">
            <div className="shrink-0 bg-[#217346]">
                <TitleBar />
                <MenuBar />
            </div>
            <Ribbon />
            <FormulaBar />
            <Sheet />
            <SheetTabs />
            <StatusBar />
            <FormatDialog />
            <Pointer />
        </div>
    );
};
export default App;
